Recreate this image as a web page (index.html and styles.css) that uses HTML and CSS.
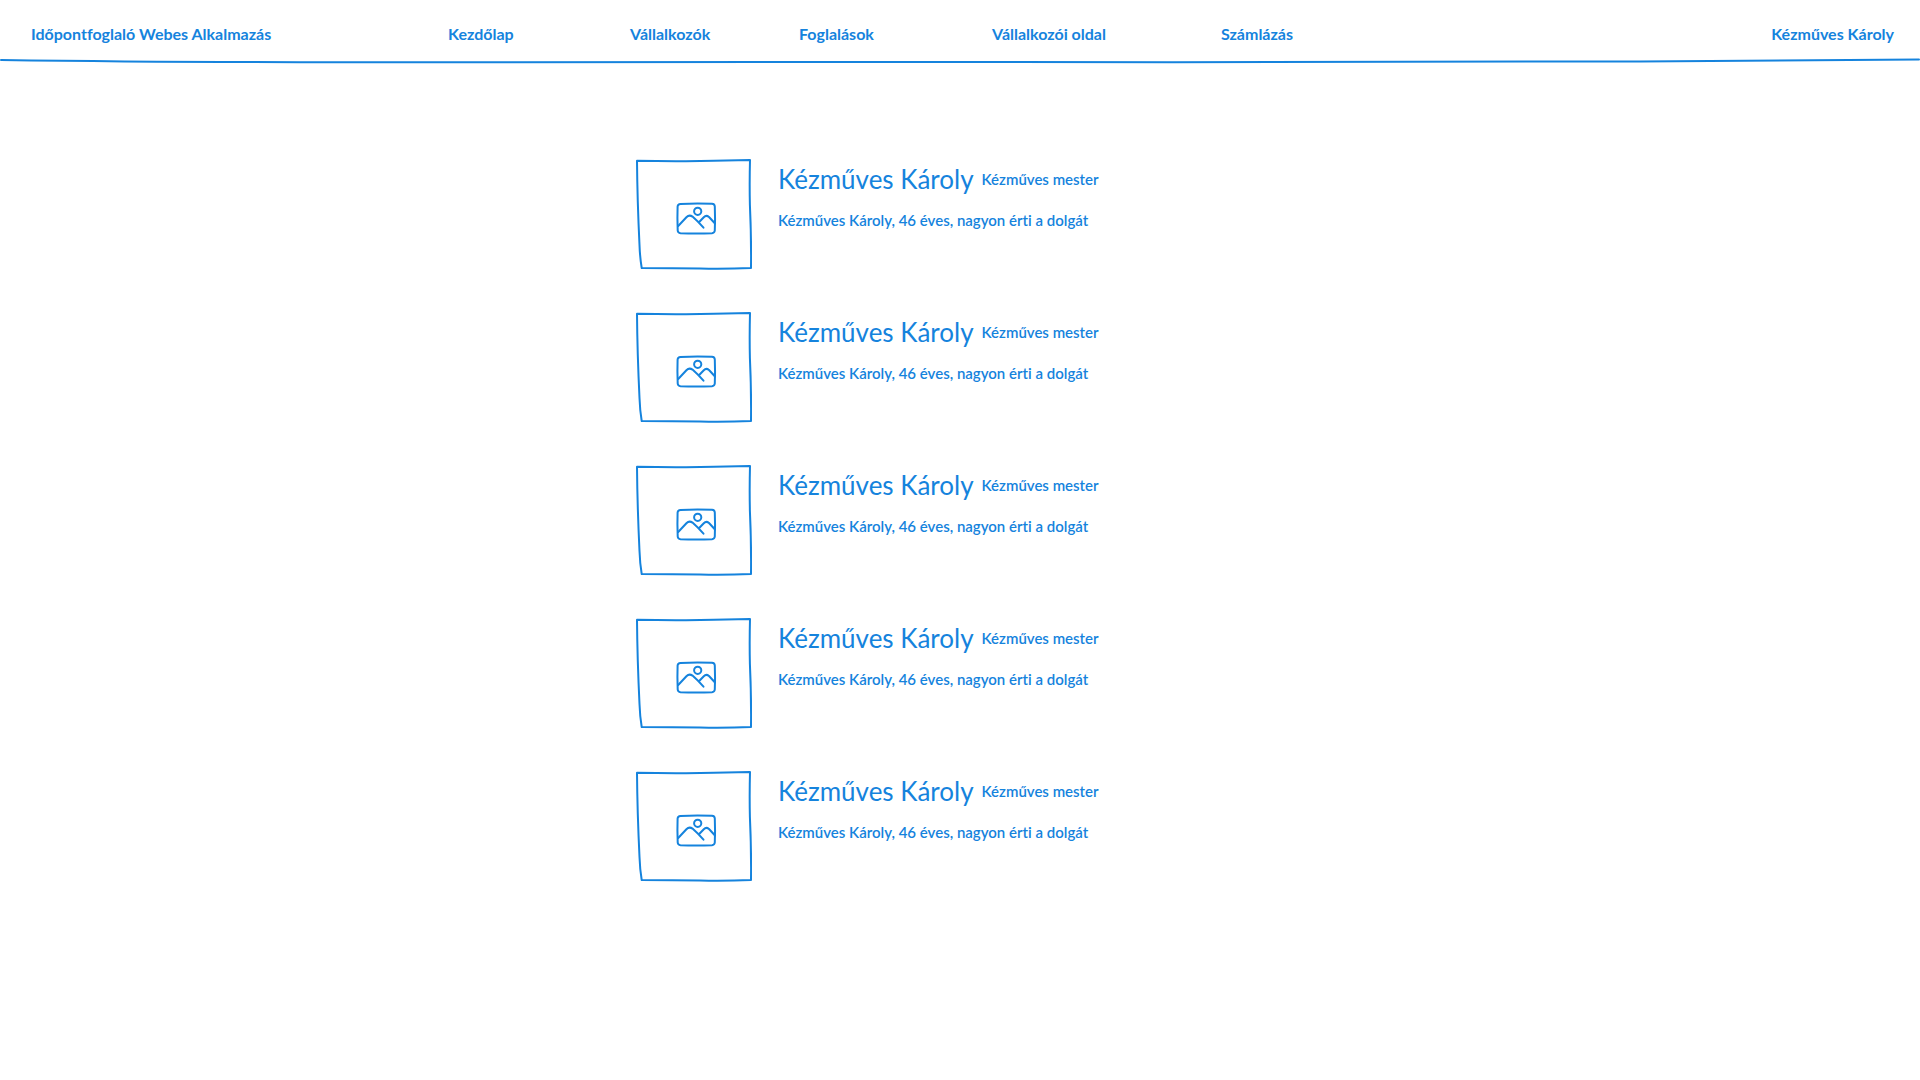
FILE: index.html
```html
<!DOCTYPE html>
<html lang="hu">
<head>
<meta charset="utf-8">
<meta name="viewport" content="width=device-width, initial-scale=1">
<title>Időpontfoglaló Webes Alkalmazás</title>
<link rel="stylesheet" href="styles.css">
</head>
<body>
<svg class="symbols" aria-hidden="true">
  <symbol id="photo" viewBox="0 0 116 111">
    <path d="M1 1.7Q20 2 40 2.2T78 1.8L114 1Q113.4 24 113.9 46Q115.4 78 115 109Q90 110.2 64 109.6T5.7 109Q3.9 98 3.5 86Q1.3 40 1 1.7Z"/>
    <path d="M44.5 44.9Q60 44.3 76 44.8Q78.7 45 78.8 47.5Q79.3 60 78.8 71.5Q78.5 74 76 74.2Q60 74.8 44.5 74.2Q41.9 74 41.7 71.5Q41.2 59 41.6 47.5Q41.8 45.1 44.5 44.9Z"/>
    <circle cx="61.7" cy="52.3" r="3.6"/>
    <path d="M42.2 67L50.4 58.3Q53.2 55.3 56.5 57.6Q62 62.5 67.5 68.7M63.2 63L67.8 58.2Q70.2 55.6 73 58L79 64.5"/>
  </symbol>
</svg>
<header class="header">
  <nav class="nav">
    <a class="link" href="#">Időpontfoglaló Webes Alkalmazás</a>
    <a class="link" href="#">Kezdőlap</a>
    <a class="link" href="#">Vállalkozók</a>
    <a class="link" href="#">Foglalások</a>
    <a class="link" href="#">Vállalkozói oldal</a>
    <a class="link" href="#">Számlázás</a>
    <a class="link user" href="#">Kézműves Károly</a>
  </nav>
  <svg class="rule" viewBox="0 0 1920 6" preserveAspectRatio="none" aria-hidden="true"><path d="M1 2Q140 4 300 4.2T960 4Q1300 4.5 1640 3.4L1919 1.4"/></svg>
</header>
<main class="main">
  <ul class="list">
    <li class="item">
      <svg class="photo" role="img" aria-label="Kézműves Károly"><use href="#photo"/></svg>
      <div class="info">
        <div class="title"><h2 class="name">Kézműves Károly</h2><span class="job">Kézműves mester</span></div>
        <p class="about">Kézműves Károly, 46 éves, nagyon érti a dolgát</p>
      </div>
    </li>
    <li class="item">
      <svg class="photo" role="img" aria-label="Kézműves Károly"><use href="#photo"/></svg>
      <div class="info">
        <div class="title"><h2 class="name">Kézműves Károly</h2><span class="job">Kézműves mester</span></div>
        <p class="about">Kézműves Károly, 46 éves, nagyon érti a dolgát</p>
      </div>
    </li>
    <li class="item">
      <svg class="photo" role="img" aria-label="Kézműves Károly"><use href="#photo"/></svg>
      <div class="info">
        <div class="title"><h2 class="name">Kézműves Károly</h2><span class="job">Kézműves mester</span></div>
        <p class="about">Kézműves Károly, 46 éves, nagyon érti a dolgát</p>
      </div>
    </li>
    <li class="item">
      <svg class="photo" role="img" aria-label="Kézműves Károly"><use href="#photo"/></svg>
      <div class="info">
        <div class="title"><h2 class="name">Kézműves Károly</h2><span class="job">Kézműves mester</span></div>
        <p class="about">Kézműves Károly, 46 éves, nagyon érti a dolgát</p>
      </div>
    </li>
    <li class="item">
      <svg class="photo" role="img" aria-label="Kézműves Károly"><use href="#photo"/></svg>
      <div class="info">
        <div class="title"><h2 class="name">Kézműves Károly</h2><span class="job">Kézműves mester</span></div>
        <p class="about">Kézműves Károly, 46 éves, nagyon érti a dolgát</p>
      </div>
    </li>
  </ul>
</main>
</body>
</html>
```
FILE: styles.css
```css
* { box-sizing: border-box; }
body {
  margin: 0;
  background: #fff;
  color: #1583dd;
  font-family: Lato, "Open Sans", sans-serif;
  font-variant-ligatures: none;
}
.symbols { display: none; }
.nav {
  display: grid;
  grid-template-columns: 417fr 182fr 169fr 193fr 229fr 200fr 473fr;
  padding: 22px 26px 12px 31px;
}
.link {
  color: inherit;
  font-size: 16px;
  font-weight: 700;
  line-height: 24px;
  text-decoration: none;
  white-space: nowrap;
}
.user { justify-self: end; }
.rule, .photo {
  display: block;
  fill: none;
  stroke: #1583dd;
  stroke-width: 2;
  stroke-linejoin: round;
  stroke-linecap: round;
}
.rule { width: 100%; height: 6px; }
.main {
  display: grid;
  grid-template-columns: 636fr 1284fr;
  padding: 95px 0 48px;
}
.list {
  grid-column: 2;
  display: flex;
  flex-direction: column;
  gap: 42px;
  margin: 0;
  padding: 0;
  list-style: none;
}
.item { display: flex; gap: 26px; }
.photo { flex: none; width: 116px; height: 111px; }
.title { display: flex; align-items: center; gap: 8px; }
.name {
  margin: 0;
  font-size: 26px;
  font-weight: 400;
  line-height: 40px;
}
.job, .about {
  font-size: 15px;
  font-weight: 600;
  line-height: 24px;
}
.about { margin: 9px 0 0; }
```
